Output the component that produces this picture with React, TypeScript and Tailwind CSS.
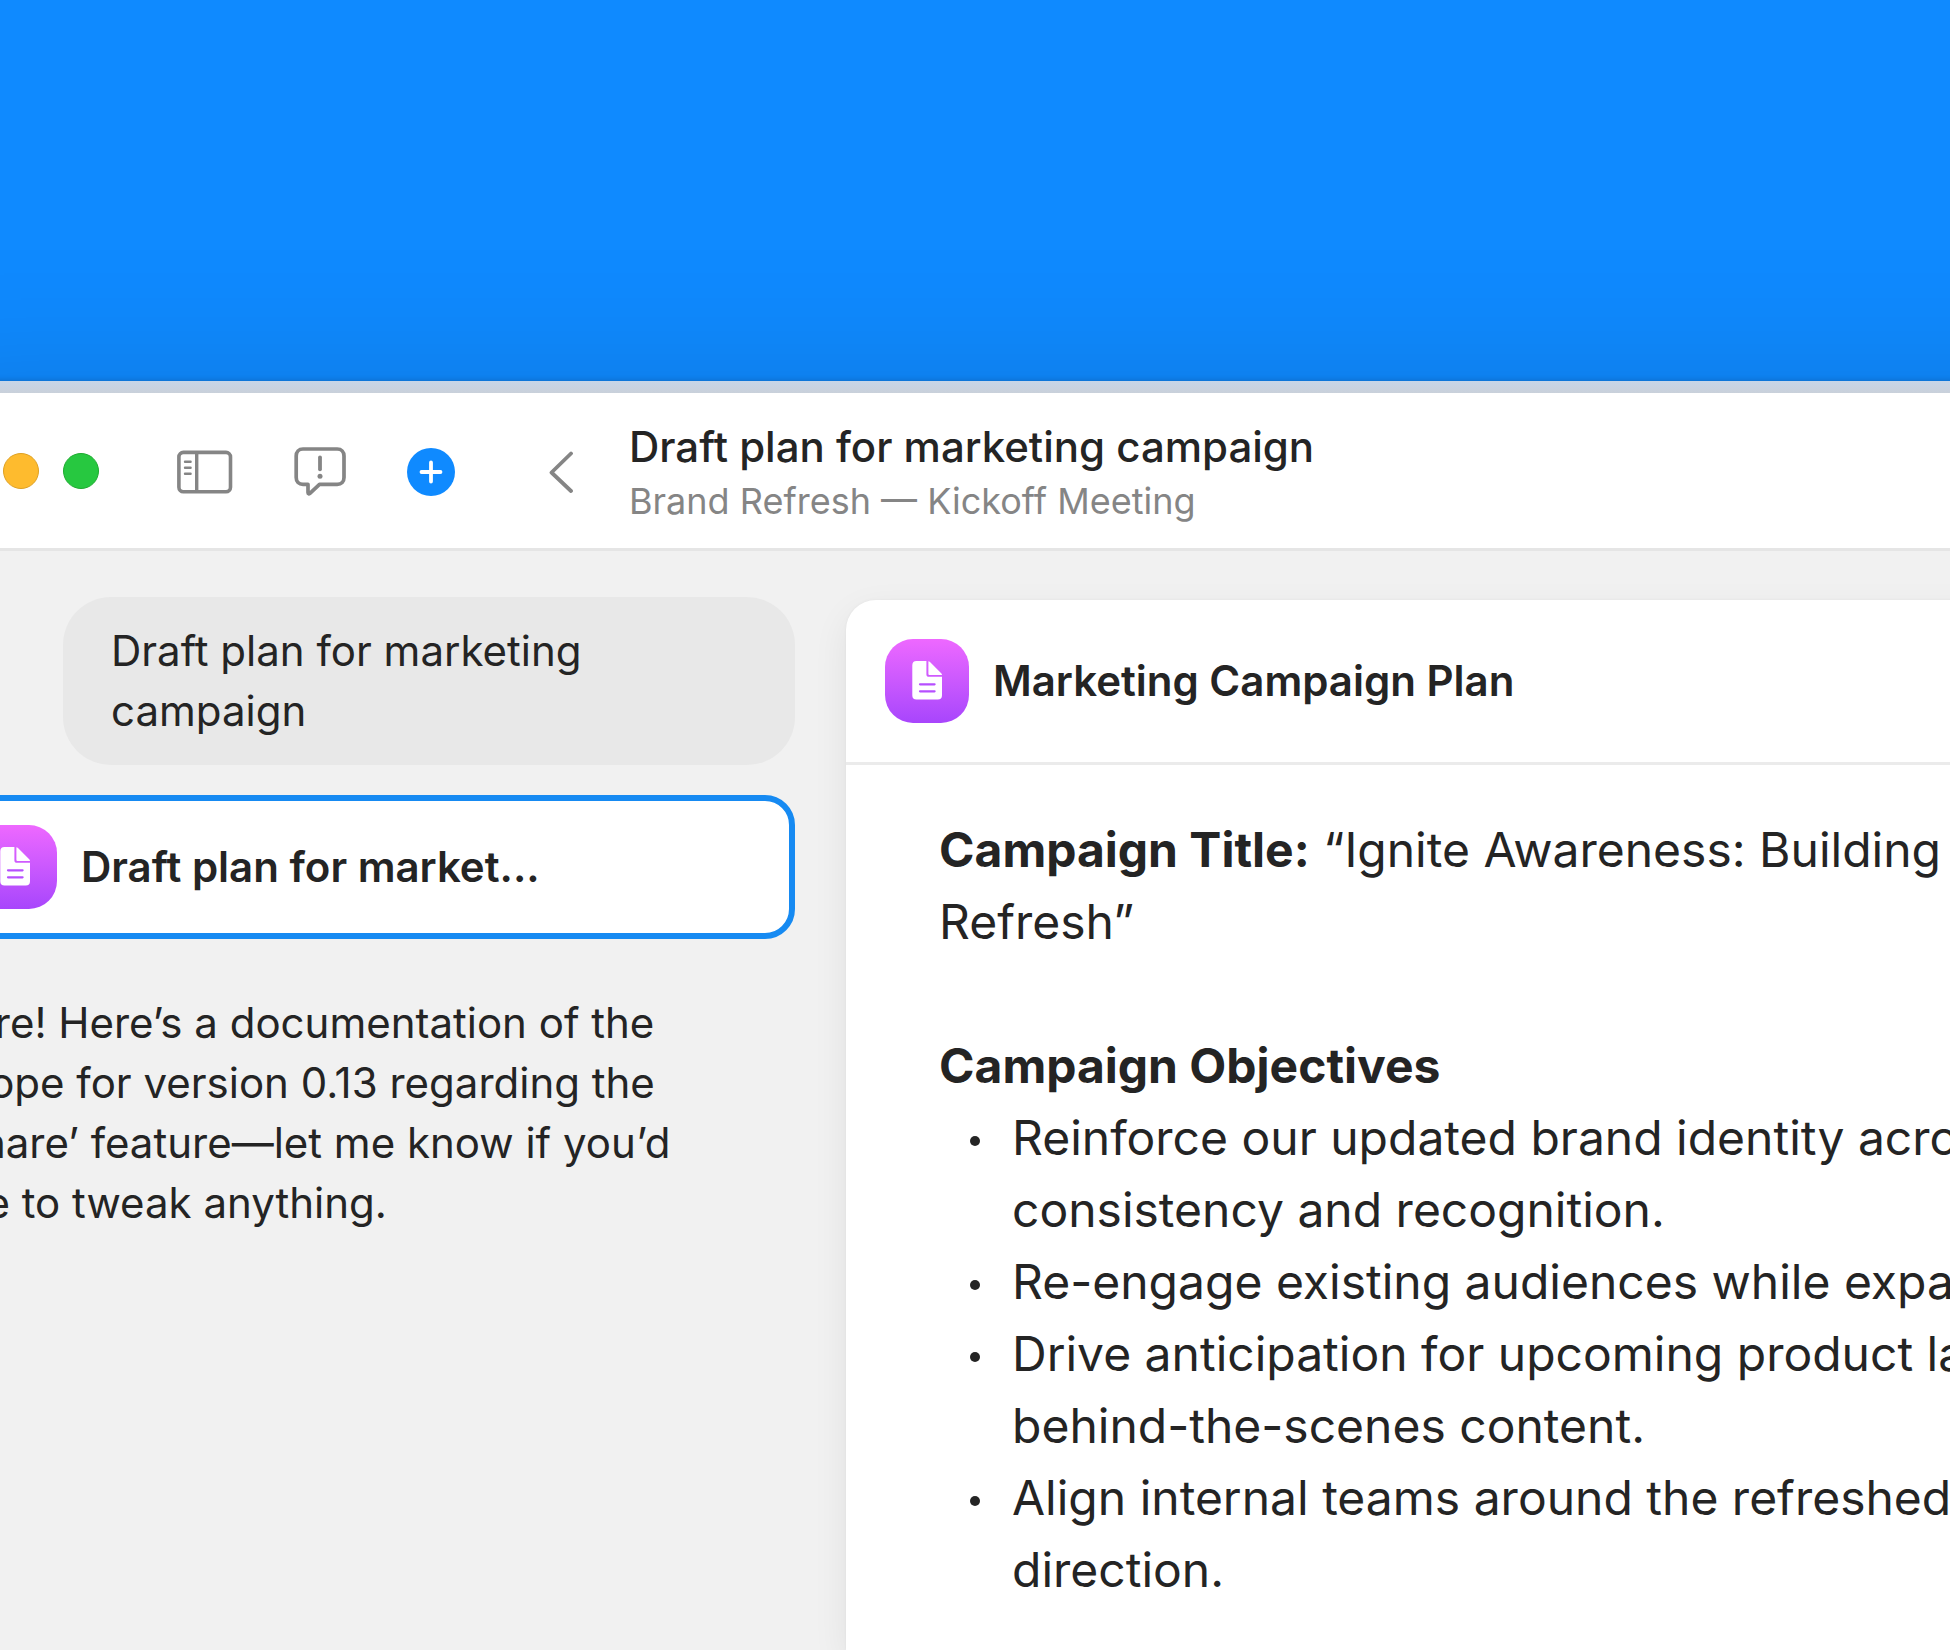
import type { ReactNode } from "react";

interface Objective {
  id: string;
  lines: string[];
}

const OBJECTIVES: Objective[] = [
  { id: "identity",  lines: ["Reinforce our updated brand identity across", "consistency and recognition."] },
  { id: "audiences", lines: ["Re-engage existing audiences while expanding"] },
  { id: "launches",  lines: ["Drive anticipation for upcoming product launches", "behind-the-scenes content."] },
  { id: "teams",     lines: ["Align internal teams around the refreshed", "direction."] },
];

const REPLY_LINES = [
  "Sure! Here’s a documentation of the",
  "scope for version 0.13 regarding the",
  "‘Share’ feature—let me know if you’d",
  "like to tweak anything.",
];

function SidebarIcon() {
  return (
    <svg className="w-14 h-11" viewBox="0 0 56 44" fill="none" stroke="currentColor" strokeLinecap="round">
      <rect x="1.9" y="2.4" width="51.6" height="39.4" rx="4.5" strokeWidth="3.6" />
      <path d="M19.7 3v38" strokeWidth="3.4" />
      <path d="M8 11.7h5.6M8 17.7h5.6M8 23.7h5.6" strokeWidth="2.4" />
    </svg>
  );
}

function FeedbackIcon() {
  return (
    <svg className="w-[52px] h-[50px]" viewBox="0 0 52 50" fill="none" stroke="currentColor" strokeLinejoin="round" strokeLinecap="round">
      <path d="M9 2h34.2c4.2 0 6.8 2.8 6.8 7v21.400c0 4.200-2.600 7-6.800 7H25.500L16.200 46.200c-1 1-2.200.6-2.200-.8v-8H9c-4.200 0-6.800-2.800-6.800-7V9C2.200 4.800 4.800 2 9 2z" strokeWidth="3.7" />
      <path d="M26 10.3v12" strokeWidth="3.8" />
      <circle cx="26" cy="29.3" r="2.5" fill="currentColor" stroke="none" />
    </svg>
  );
}

function DocTile() {
  return (
    <span className="size-[84px] shrink-0 rounded-[28px] bg-linear-to-b from-[#ee68ff] to-[#a845fc]">
      <svg className="size-full" viewBox="0 0 84 84" fill="none">
        <path d="M31.5 22H41.4V35.2Q41.4 37.8 44 37.8H57V56.2Q57 60.5 52.7 60.5H31.5Q27.3 60.5 27.3 56.2V26.3Q27.3 22 31.5 22Z" fill="#fff" />
        <path d="M43.4 22.2Q44.3 22.2 45 23L56.2 34.3Q57 35.1 57 36H44.4Q43.4 36 43.4 35Z" fill="#fff" />
        <path d="M35 45.3h14.600M35 52.3h14.600" stroke="#b64fff" strokeWidth="2.2" strokeLinecap="round" />
      </svg>
    </span>
  );
}

function IconButton({ label, children }: { label: string; children: ReactNode }) {
  return (
    <button aria-label={label} className="flex items-center text-[#858585] shrink-0">
      {children}
    </button>
  );
}

export default function App() {
  return (
    <div className="min-h-screen flex flex-col overflow-hidden bg-[#0f8aff] font-['Inter',sans-serif] text-[#242424]">
      {/* The window runs past both sides of the desktop */}
      <main className="flex-1 flex flex-col mt-[381px] -ml-[120px] -mr-[240px] bg-[#f1f1f1] shadow-[0_0_6px_rgba(0,0,0,0.2),0_10px_140px_rgba(0,0,0,0.15)]">
        <div className="h-3 bg-linear-to-b from-[#c6d5e8] to-[#c9d0da]" />

        {/* Title bar */}
        <header className="flex items-center h-[158px] pl-[63px] bg-white border-b-3 border-[#e5e5e5]">
          <div className="flex gap-6">
            <button aria-label="Close" className="size-9 rounded-full bg-[#ff5f57] border border-[#e0443e]" />
            <button aria-label="Minimize" className="size-9 rounded-full bg-[#febb2e] border border-[#dea123]" />
            <button aria-label="Zoom" className="size-9 rounded-full bg-[#27c840] border border-[#1eab2f]" />
          </div>
          <div className="flex items-center pt-0.5 ml-[78px]">
            <div className="flex items-center gap-[61px]">
              <IconButton label="Toggle sidebar"><SidebarIcon /></IconButton>
              <IconButton label="Send feedback"><FeedbackIcon /></IconButton>
              <button aria-label="New chat" className="size-12 rounded-full bg-[#0f8aff] text-white">
                <svg className="size-full" viewBox="0 0 48 48" fill="none" stroke="currentColor" strokeWidth="3.8" strokeLinecap="round">
                  <path d="M24 14.5v19M14.5 24h19" />
                </svg>
              </button>
            </div>
            <div className="flex items-center gap-14 ml-[94px]">
              <IconButton label="Back">
                <svg className="w-6 h-11" viewBox="0 0 24 44" fill="none" stroke="currentColor" strokeWidth="3.8" strokeLinecap="round" strokeLinejoin="round">
                  <path d="M22 3.5L2.5 22.5L22 41" />
                </svg>
              </IconButton>
              <div className="flex flex-col gap-0.5 whitespace-nowrap">
                <h1 className="text-[42px] leading-[56px] font-medium">Draft plan for marketing campaign</h1>
                <p className="text-[36px] leading-[48px] text-[#858585]">Brand Refresh — Kickoff Meeting</p>
              </div>
            </div>
          </div>
        </header>

        <div className="flex-1 flex gap-[51px] pl-[63px]">
          {/* Chat */}
          <section className="w-[852px] shrink-0 pt-[46px] text-[42px] leading-[60px]">
            <p className="ml-[120px] px-12 py-6 rounded-[48px] bg-[#e8e8e8]">Draft plan for marketing campaign</p>
            <button className="mt-[30px] w-full h-36 px-6 flex items-center gap-6 rounded-[30px] border-6 border-[#168af2] bg-white">
              <DocTile />
              <span className="font-semibold whitespace-nowrap">Draft plan for market...</span>
            </button>
            <p className="mt-[54px] whitespace-nowrap">
              {REPLY_LINES.map(line => (
                <span key={line} className="block">{line}</span>
              ))}
            </p>
          </section>

          {/* Document */}
          <article className="flex-1 min-w-0 mt-[49px] rounded-tl-[30px] bg-white shadow-[0_12px_36px_rgba(0,0,0,0.07),0_0_3px_rgba(0,0,0,0.05)]">
            <div className="flex items-center gap-6 h-[165px] pl-[39px] border-b-3 border-[#ebebeb]">
              <DocTile />
              <h2 className="text-[42px] leading-[60px] font-semibold whitespace-nowrap">Marketing Campaign Plan</h2>
            </div>
            <div className="pt-[49px] pl-[93px] text-[48px] leading-[72px] whitespace-nowrap">
              <p>
                <strong>Campaign Title:</strong> “Ignite Awareness: Building Momentum<br />
                Refresh”
              </p>
              <h3 className="mt-[72px] font-bold">Campaign Objectives</h3>
              <ul>
                {OBJECTIVES.map(o => (
                  <li key={o.id} className="flex gap-8">
                    <span className="ml-[31px] mt-[34px] size-[10px] shrink-0 rounded-full bg-[#242424]" />
                    <span>
                      {o.lines.map(line => (
                        <span key={line} className="block">{line}</span>
                      ))}
                    </span>
                  </li>
                ))}
              </ul>
            </div>
          </article>
        </div>
      </main>
    </div>
  );
}
